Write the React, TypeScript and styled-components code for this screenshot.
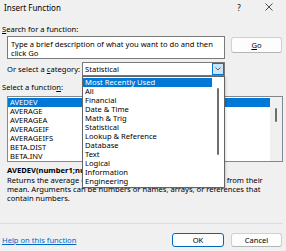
import styled, { createGlobalStyle } from "styled-components";

const GlobalStyle = createGlobalStyle`
  html, body {
    margin: 0;
    padding: 0;
    background: #f0f0f0;
  }
  body {
    font-family: "Noto Sans", "Open Sans", sans-serif;
    font-size: 7.6px;
    color: #000;
  }
`;

const Dialog = styled.div`
  position: relative;
  width: 286px;
  height: 251px;
  background: #f0f0f0;
  overflow: hidden;
  display: flex;
  flex-direction: column;
`;

const TitleBar = styled.div`
  height: 14px;
  display: flex;
  align-items: center;
  padding-left: 4px;
  padding-right: 2px;
  font-size: 8px;
`;

const Title = styled.div`
  flex: 1;
`;

const TitleButton = styled.div`
  width: 30px;
  height: 14px;
  display: flex;
  align-items: center;
  justify-content: center;
  font-size: 8px;
`;

const Label = styled.div<{ $indent?: number; $top?: number }>`
  line-height: 10px;
  height: 10px;
  padding-left: ${({ $indent }) => $indent ?? 2}px;
  margin-top: ${({ $top }) => $top ?? 0}px;
  white-space: nowrap;
`;

const SearchRow = styled.div`
  display: flex;
  align-items: flex-start;
  gap: 6px;
  margin-top: 2px;
  padding-left: 7px;
`;

const SearchBox = styled.div`
  box-sizing: border-box;
  width: 218px;
  height: 23px;
  background: #fff;
  border: 1px solid #7a7a7a;
  padding: 3px 0 0 3px;
  line-height: 9px;
  white-space: nowrap;
  overflow: hidden;
`;

const Button = styled.div<{ $primary?: boolean; $width: number }>`
  box-sizing: border-box;
  width: ${({ $width }) => $width}px;
  height: 14px;
  background: #fdfdfd;
  border: 1px solid ${({ $primary }) => ($primary ? "#0067c0" : "#d0d0d0")};
  border-bottom-color: ${({ $primary }) => ($primary ? "#0067c0" : "#b5b5b5")};
  border-radius: 3px;
  display: flex;
  align-items: center;
  justify-content: center;
  line-height: 10px;
`;

const GoButton = styled(Button)`
  height: 16px;
  margin-top: 1px;
`;

const CategoryRow = styled.div`
  display: flex;
  align-items: center;
  margin-top: 3px;
  padding-left: 7px;
  height: 14px;
`;

const CategoryLabel = styled.div`
  width: 75px;
  white-space: nowrap;
`;

const SelectBox = styled.div`
  box-sizing: border-box;
  width: 143px;
  height: 14px;
  background: #fff;
  border: 1px solid #7a7a7a;
  display: flex;
  align-items: center;
  padding-left: 2px;
`;

const SelectValue = styled.div`
  flex: 1;
  line-height: 10px;
`;

const SelectArrow = styled.div`
  box-sizing: border-box;
  width: 12px;
  height: 12px;
  background: #cce4f7;
  border: 1px solid #0078d7;
  display: flex;
  align-items: center;
  justify-content: center;
`;

const ListBox = styled.div`
  box-sizing: border-box;
  display: flex;
  width: 276px;
  height: 66px;
  margin: 4px 0 0 7px;
  background: #fff;
  border: 1px solid #828790;
`;

const Items = styled.div`
  flex: 1;
  padding-top: 1px;
  overflow: hidden;
`;

const Item = styled.div<{ $selected?: boolean }>`
  height: 9px;
  line-height: 9px;
  padding-left: 2px;
  white-space: nowrap;
  background: ${({ $selected }) => ($selected ? "#0078d7" : "transparent")};
  color: ${({ $selected }) => ($selected ? "#fff" : "#000")};
`;

const Track = styled.div<{ $bg: string; $pad: number }>`
  width: 12px;
  background: ${({ $bg }) => $bg};
  padding-top: ${({ $pad }) => $pad}px;
  box-sizing: border-box;
  display: flex;
  justify-content: center;
`;

const Thumb = styled.div<{ $h: number }>`
  width: 1.5px;
  height: ${({ $h }) => $h}px;
  background: #6e6e6e;
  border-radius: 1px;
`;

const Description = styled.div`
  padding: 0 4px 0 7px;
  margin-top: 4px;
`;

const Signature = styled.div`
  font-weight: bold;
  line-height: 9px;
  white-space: nowrap;
`;

const Body = styled.div`
  margin-top: 1px;
  line-height: 9px;
`;

const Separator = styled.div`
  margin-top: auto;
  height: 1px;
  background: #dcdcdc;
  margin-right: 3px;
`;

const Footer = styled.div`
  display: flex;
  align-items: center;
  gap: 7px;
  height: 14px;
  margin: 9px 4px 4px 2px;
`;

const HelpLink = styled.a`
  flex: 1;
  color: #0066cc;
  text-decoration: underline;
  white-space: nowrap;
`;

const Dropdown = styled.div`
  position: absolute;
  left: 82px;
  top: 76px;
  width: 143px;
  height: 112px;
  box-sizing: border-box;
  background: #fff;
  border: 1px solid #646464;
  display: flex;
  box-shadow: 1px 1px 2px rgba(0, 0, 0, 0.15);
`;

const functions = [
  "AVEDEV",
  "AVERAGE",
  "AVERAGEA",
  "AVERAGEIF",
  "AVERAGEIFS",
  "BETA.DIST",
  "BETA.INV",
];

const categories = [
  "Most Recently Used",
  "All",
  "Financial",
  "Date & Time",
  "Math & Trig",
  "Statistical",
  "Lookup & Reference",
  "Database",
  "Text",
  "Logical",
  "Information",
  "Engineering",
];

export default function App() {
  return (
    <>
      <GlobalStyle />
      <Dialog>
        <TitleBar>
          <Title>Insert Function</Title>
          <TitleButton>?</TitleButton>
          <TitleButton>
            <svg width="8" height="8" viewBox="0 0 8 8">
              <path d="M0.5 0.5 L7.5 7.5 M7.5 0.5 L0.5 7.5" stroke="#222" strokeWidth="0.8" />
            </svg>
          </TitleButton>
        </TitleBar>

        <Label $top={10}>
          <u>S</u>earch for a function:
        </Label>
        <SearchRow>
          <SearchBox>
            Type a brief description of what you want to do and then
            <br />
            click Go
          </SearchBox>
          <GoButton $width={51}>
            <span>
              <u>G</u>o
            </span>
          </GoButton>
        </SearchRow>

        <CategoryRow>
          <CategoryLabel>
            Or select a <u>c</u>ategory:
          </CategoryLabel>
          <SelectBox>
            <SelectValue>Statistical</SelectValue>
            <SelectArrow>
              <svg width="6" height="4" viewBox="0 0 6 4">
                <path d="M0.5 0.5 L3 3 L5.5 0.5" fill="none" stroke="#3a5a78" strokeWidth="0.9" />
              </svg>
            </SelectArrow>
          </SelectBox>
        </CategoryRow>

        <Label $top={6}>
          Select a functio<u>n</u>:
        </Label>
        <ListBox>
          <Items>
            {functions.map((f, i) => (
              <Item key={f} $selected={i === 0}>
                {f}
              </Item>
            ))}
          </Items>
          <Track $bg="#f0f0f0" $pad={11}>
            <Thumb $h={14} />
          </Track>
        </ListBox>

        <Description>
          <Signature>AVEDEV(number1;number2;...)</Signature>
          <Body>
            Returns the average of the absolute deviations of data points from their mean.
            Arguments can be numbers or names, arrays, or references that contain numbers.
          </Body>
        </Description>

        <Separator />
        <Footer>
          <HelpLink>Help on this function</HelpLink>
          <Button $primary $width={52}>OK</Button>
          <Button $width={51}>Cancel</Button>
        </Footer>

        <Dropdown>
          <Items>
            {categories.map((c, i) => (
              <Item key={c} $selected={i === 0}>
                {c}
              </Item>
            ))}
          </Items>
          <Track $bg="#fff" $pad={11}>
            <Thumb $h={67} />
          </Track>
        </Dropdown>
      </Dialog>
    </>
  );
}
